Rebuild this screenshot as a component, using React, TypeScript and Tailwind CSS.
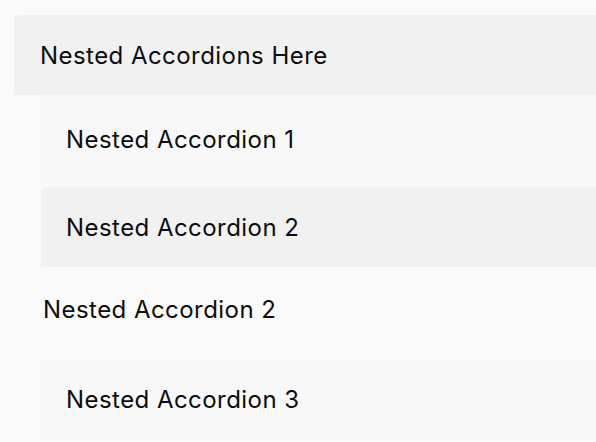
export default function App() {
  return (
    <div
      className="min-h-[442px] overflow-hidden bg-[#fafafa] pt-[15px] pl-[14px] text-[24px] tracking-[0.45px] text-[#0d0d0d]"
      style={{ fontFamily: "Inter, 'Noto Sans', sans-serif" }}
    >
      <div className="flex h-[80px] items-center rounded-tl-[5px] bg-[#f1f1f1] pt-[2px] pl-[26px]">
        Nested Accordions Here
      </div>
      <div className="pl-[27px]">
        <div className="flex h-[92px] items-center bg-[#f8f8f8] pb-[2px] pl-[25px]">
          Nested Accordion 1
        </div>
        <div className="flex h-[80px] items-center rounded-tl-[5px] bg-[#f1f1f1] pt-[2px] pl-[25px]">
          Nested Accordion 2
        </div>
        <div className="flex h-[92px] items-center pb-[6px] pl-[2px]">
          Nested Accordion 2
        </div>
        <div className="flex h-[81px] items-center bg-[#f8f8f8] pl-[25px]">
          Nested Accordion 3
        </div>
      </div>
    </div>
  );
}
